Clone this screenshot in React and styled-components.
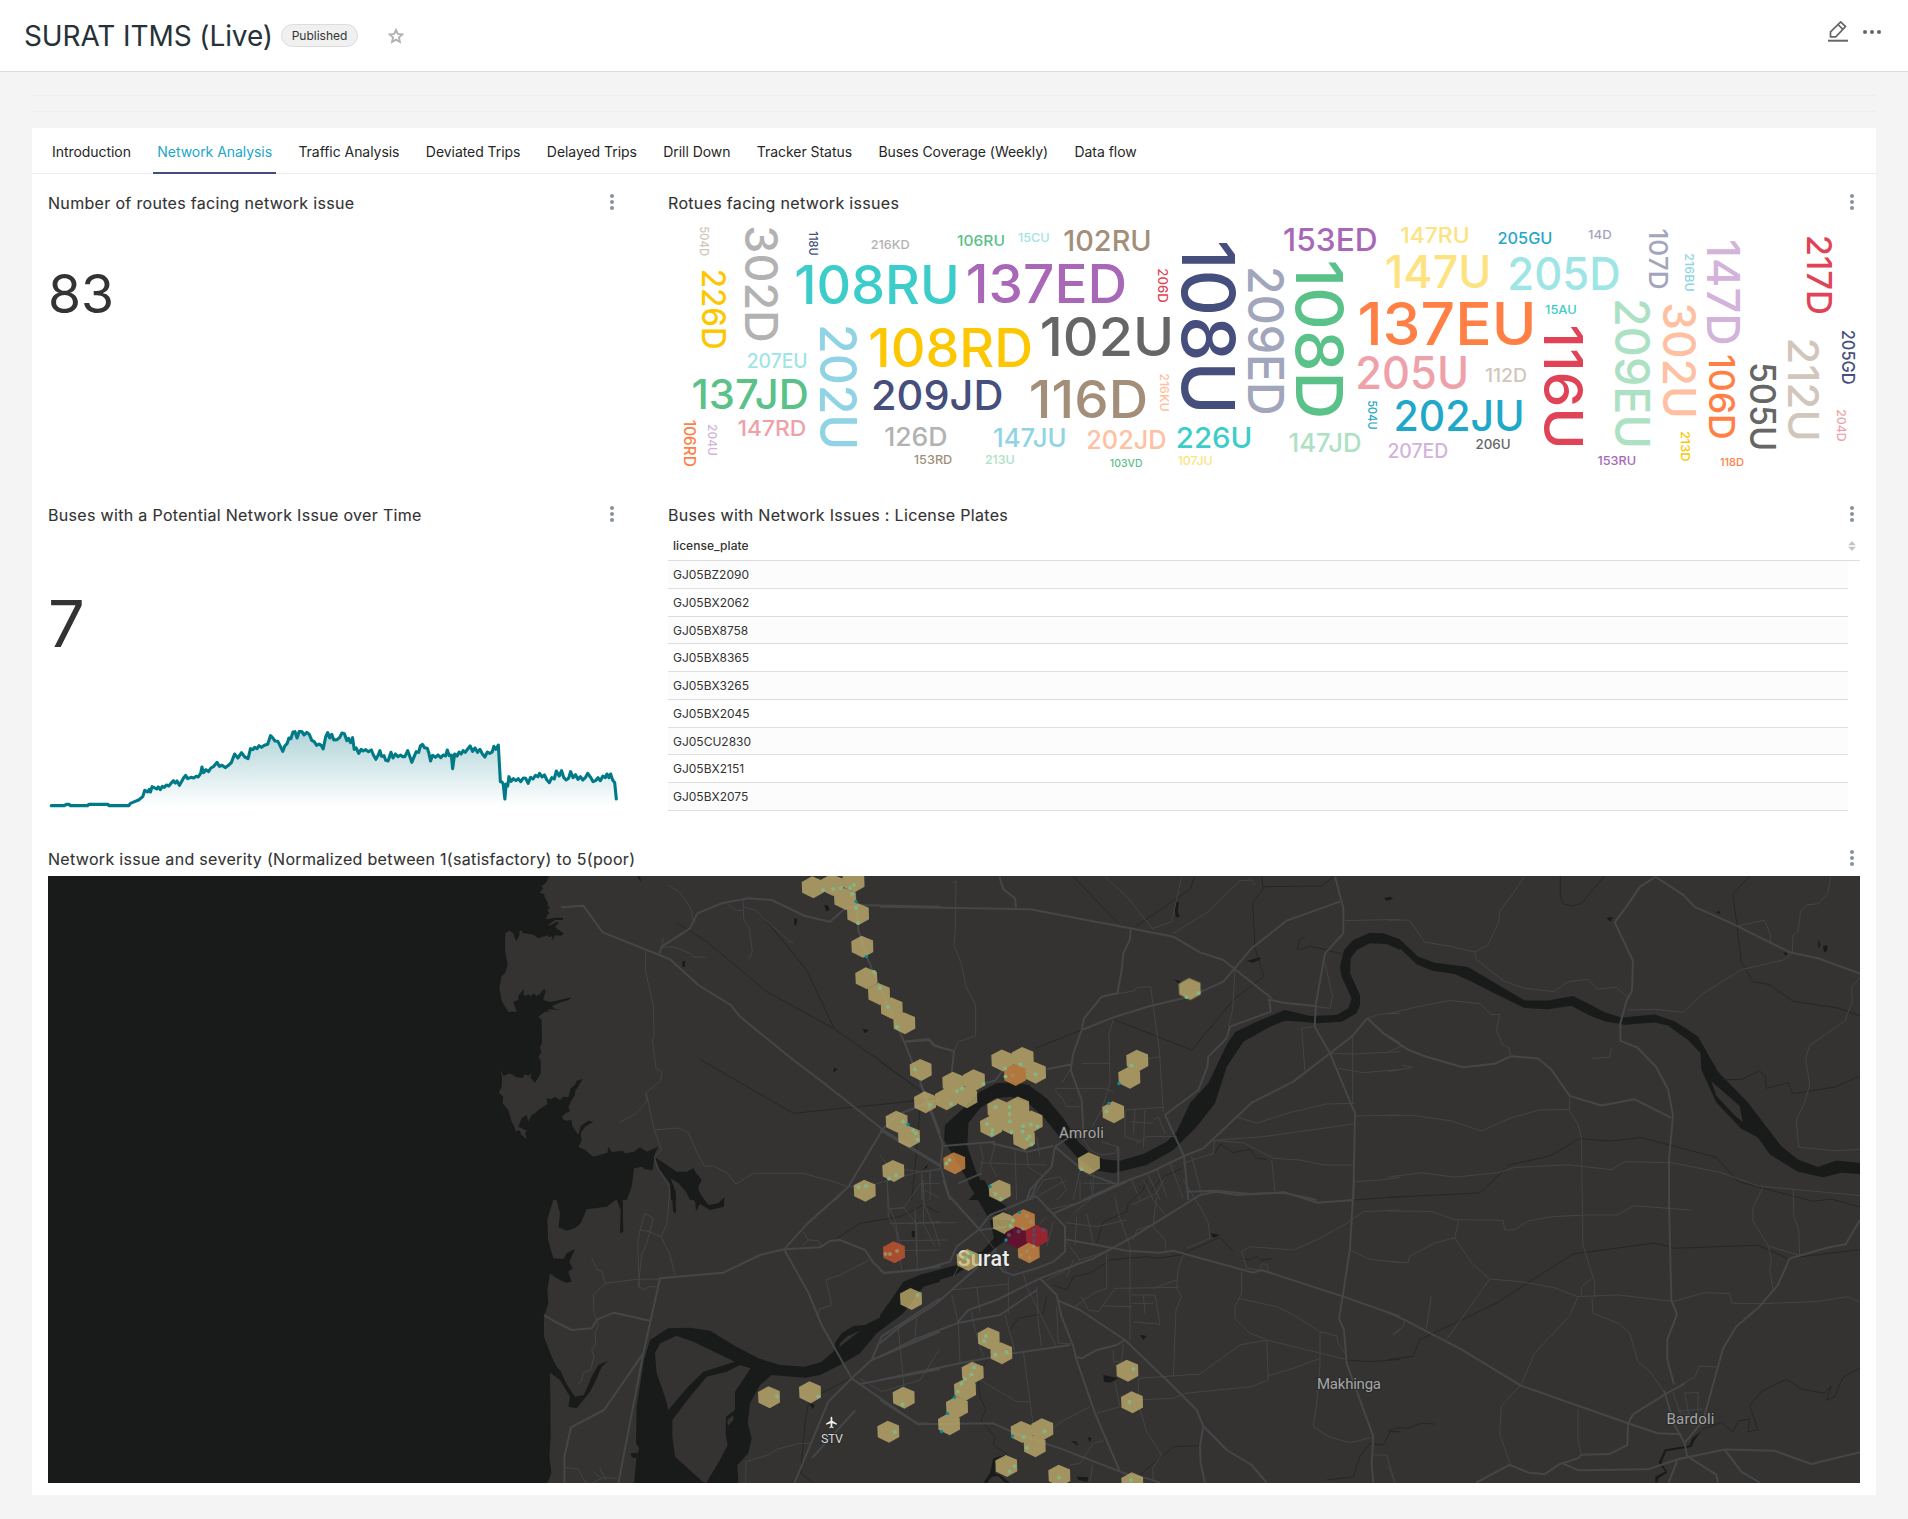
import React from 'react';
import styled, { createGlobalStyle } from 'styled-components';

const GlobalStyle = createGlobalStyle`
  *, *::before, *::after { box-sizing: border-box; }
  body {
    margin: 0;
    background: #f4f4f4;
    color: #333;
    font-family: Inter, "Open Sans", sans-serif;
    font-size: 14px;
  }
  svg { display: block; }
`;

const Page = styled.div`
  display: flex;
  flex-direction: column;
  height: 1519px;
  overflow: hidden;
`;

const Header = styled.header`
  display: flex;
  align-items: center;
  height: 72px;
  flex: none;
  padding: 0 27px 0 24px;
  background: #fff;
  border-bottom: 1px solid #dcdcdc;
`;

const DashboardTitle = styled.h1`
  margin: 0;
  width: 257px;
  font-size: 28px;
  font-weight: 400;
  line-height: 36px;
  letter-spacing: -0.1px;
  color: #263238;
  white-space: nowrap;
`;

const Badge = styled.span`
  height: 23px;
  width: 77px;
  border: 1px solid #dcdcdc;
  border-radius: 12px;
  background: #f0f0f0;
  font-size: 12px;
  line-height: 21px;
  text-align: center;
  color: #333;
`;

const StarButton = styled.div`
  margin-left: 30px;
`;

const HeaderActions = styled.div`
  display: flex;
  align-items: center;
  gap: 15px;
  margin-left: auto;
  margin-bottom: 7px;
`;

const EmptyFilterRow = styled.div`
  flex: none;
  height: 17px;
  margin: 23px 32px 16px;
  border: solid #eeeeee;
  border-width: 1px 0;
`;

const Dashboard = styled.main`
  flex: none;
  height: 1367px;
  margin: 0 32px;
  background: #fff;
`;

const Tabs = styled.nav`
  display: flex;
  gap: 18.4px;
  height: 46px;
  padding: 0 16px;
  border-bottom: 1px solid #ececec;
`;

const Tab = styled.div`
  height: 46px;
  padding: 0 4px;
  font-size: 14px;
  line-height: 48px;
  letter-spacing: -0.05px;
  white-space: nowrap;
  color: ${(p) => (p.$active ? '#20a7c9' : '#262626')};
  border-bottom: 2px solid ${(p) => (p.$active ? '#444e7c' : 'transparent')};
`;

const Grid = styled.div`
  display: grid;
  grid-template-columns: 572px 1192px;
  grid-template-rows: 296px 328px 635px;
  column-gap: 48px;
  row-gap: 16px;
  padding: 18px 16px 0;
`;

const Card = styled.section`
  display: flex;
  flex-direction: column;
  grid-column: ${(p) => (p.$wide ? '1 / -1' : 'auto')};
  min-width: 0;
`;

const CardHeader = styled.div`
  display: flex;
  flex: none;
  justify-content: space-between;
  align-items: center;
  height: 22px;
  padding-right: 6px;
`;

const CardTitle = styled.h2`
  margin: 0;
  font-size: 16px;
  font-weight: 400;
  line-height: 22px;
  letter-spacing: 0.32px;
  color: #333;
  -webkit-text-stroke: 0.12px #333;
`;

const MenuIcon = styled.svg`
  margin-bottom: 2px;
`;

const BigNumber = styled.div`
  padding-top: ${(p) => p.$top}px;
  font-size: ${(p) => p.$size}px;
  line-height: ${(p) => p.$size}px;
  color: #333;
`;

const Spark = styled.svg`
  margin-top: auto;
  margin-bottom: 22px;
  width: 572px;
  height: 90px;
`;

const Cloud = styled.svg`
  width: 1192px;
  height: 274px;
  font-family: Inter, sans-serif;
`;

const TableHead = styled.div`
  display: flex;
  justify-content: space-between;
  align-items: center;
  height: 35px;
  padding: 5px 4px 0 5px;
  border-bottom: 1px solid #ddd;
  font-size: 12px;
  font-weight: 500;
  letter-spacing: 0.05px;
`;

const TableBody = styled.div`
  margin-right: 12px;
`;

const TableRow = styled.div`
  height: 27.78px;
  padding-left: 5px;
  border-bottom: 1px solid #dedede;
  background: ${(p) => (p.$striped ? '#fcfcfc' : '#fff')};
  font-size: 12px;
  line-height: 27px;
`;

const MapCanvas = styled.svg`
  margin-top: 6px;
  width: 1812px;
  height: 607px;
  font-family: "Roboto", sans-serif;
`;

const MenuDots = () => (
  <MenuIcon width="4" height="16" viewBox="0 0 4 16" fill="#879399">
    <circle cx="2" cy="2" r="2" />
    <circle cx="2" cy="8" r="2" />
    <circle cx="2" cy="14" r="2" />
  </MenuIcon>
);

const Panel = ({ title, wide, children }) => (
  <Card $wide={wide}>
    <CardHeader>
      <CardTitle>{title}</CardTitle>
      <MenuDots />
    </CardHeader>
    {children}
  </Card>
);

const C = {
  teal: '#3cccca', purple: '#a868b7', yellow: '#fcc700', dark: '#666666', tan: '#a38f79',
  navy: '#454e7c', red: '#e04355', green: '#5ac189', orange: '#ff7f44', blue: '#1fa8c9',
  gray: '#b2b2b2', teal2: '#9ee5e5', purple2: '#d3b3da', yellow2: '#fde380', red2: '#efa1aa',
  green2: '#ace1c4', orange2: '#fec0a1', blue2: '#8fd3e4', navy2: '#a1a6bd', tan2: '#d1c6bc',
};

// [label, left, right, baseline, font size, colour]
const flatWords = [
  ['216KD', 871.4, 909, 249, 12, C.gray], ['106RU', 958, 1004, 246, 15, C.green],
  ['15CU', 1018.8, 1049, 242, 12, C.teal2], ['102RU', 1065, 1150, 251, 28.5, C.tan],
  ['108RU', 797.5, 956.5, 304, 53, C.teal], ['137ED', 969, 1124, 303, 53, C.purple],
  ['102U', 1043, 1171, 356, 54, C.dark], ['108RD', 871.5, 1030, 367, 53, C.yellow],
  ['207EU', 747.8, 806.5, 368, 19.5, C.teal2], ['137JD', 694, 806.5, 409, 41, C.green],
  ['209JD', 873.5, 1001, 409.5, 41.5, C.navy], ['116D', 1032, 1145, 418, 52, C.tan],
  ['147RD', 738.8, 805, 436, 22, C.red2], ['126D', 885.7, 946, 445.7, 25, C.gray],
  ['147JU', 994.5, 1065, 446.7, 25, C.blue2], ['202JD', 1087.8, 1165, 449, 25, C.orange2],
  ['226U', 1177.5, 1250.6, 448, 29, C.teal], ['153RD', 914.5, 951.6, 464, 12, C.tan],
  ['213U', 985.7, 1014, 464, 12, C.green2], ['103VD', 1110.5, 1141.8, 467, 10.5, C.green],
  ['107JU', 1178.4, 1212, 465, 12, C.yellow2], ['153ED', 1285, 1375.8, 251, 31, C.purple],
  ['147RU', 1401.5, 1468.4, 242.7, 22, C.yellow2], ['205GU', 1498.5, 1551.5, 243.7, 16, C.blue],
  ['14D', 1588.8, 1611, 239, 12, C.navy2], ['147U', 1387.4, 1488.8, 288, 45, C.yellow2],
  ['205D', 1510, 1618, 290, 45, C.teal2], ['137EU', 1361, 1533, 345, 59, C.orange],
  ['15AU', 1545.8, 1576, 314, 12, C.teal], ['205U', 1358, 1466.4, 388.7, 45, C.red2],
  ['112D', 1486, 1526, 382, 18, C.tan2], ['202JU', 1396, 1522, 430.7, 42, C.blue],
  ['147JD', 1290, 1360, 451.7, 25, C.green2], ['207ED', 1388.6, 1447, 458, 19.5, C.purple2],
  ['206U', 1476.2, 1509.8, 449, 12.7, C.dark], ['153RU', 1598.2, 1635.5, 465, 12, C.purple],
  ['118D', 1720.6, 1743.4, 466, 10.5, C.orange],
];

// [label, baseline x, top, bottom, font size, colour]
const tallWords = [
  ['504D', 699.6, 227, 255.3, 12, C.tan2], ['302D', 745, 228, 340, 45, C.gray],
  ['118U', 809.4, 232, 255, 12, C.navy], ['226D', 702.4, 270.7, 347.7, 32, C.yellow],
  ['202U', 820, 327, 447, 51, C.blue2], ['108U', 1181.6, 244, 410.5, 72.5, C.navy],
  ['209ED', 1248.4, 269, 412.7, 49, C.navy2], ['108D', 1296, 263.5, 415.5, 65, C.green],
  ['206D', 1157.8, 269, 302, 12.6, C.red], ['216KU', 1159.8, 374, 411, 12, C.orange2],
  ['106RD', 683.7, 420.7, 466, 15.5, C.orange], ['204U', 708, 424.7, 455.3, 12, C.purple2],
  ['107D', 1649, 230, 288, 25.5, C.navy2], ['216BU', 1685, 254, 291, 12, C.blue2],
  ['147D', 1707, 242, 343, 45, C.purple2], ['217D', 1807, 236.7, 312.7, 34, C.red],
  ['209EU', 1615, 301, 446, 48, C.green2], ['302U', 1662.5, 305, 416, 45, C.orange2],
  ['116U', 1543.8, 327.5, 446.3, 54, C.red], ['106D', 1708.6, 356, 437.7, 35, C.orange],
  ['505U', 1750.3, 364, 449, 35, C.dark], ['212U', 1787.8, 340, 439.3, 42.5, C.tan2],
  ['205GD', 1841.7, 330.7, 383.7, 17, C.navy], ['204D', 1837, 410, 441, 12, C.red2],
  ['213D', 1681, 431.7, 460.7, 12, C.yellow], ['504U', 1367.6, 401, 429, 12, C.blue],
];

const WordCloud = () => (
  <Cloud viewBox="668 214 1192 274" fontWeight="500" textAnchor="middle">
    {flatWords.map(([t, a, b, y, s, c]) => (
      <text key={t} x={(a + b) / 2} y={y} fontSize={s} fill={c} textLength={b - a + s * 0.12} lengthAdjust="spacingAndGlyphs">{t}</text>
    ))}
    {tallWords.map(([t, x, a, b, s, c]) => (
      <text key={t} transform={`translate(${x} ${(a + b) / 2}) rotate(90)`} fontSize={s} fill={c} textLength={b - a + s * 0.12} lengthAdjust="spacingAndGlyphs">{t}</text>
    ))}
  </Cloud>
);

const trend = '126,947 158,947 163,943 170,943 173,947 215,947 218,943 265,943 267,947 316,947 320,940 330,935 340,930 350,920 355,901 362,906 366,898 369,906 373,890 378,893 384,897 388,891 393,899 398,889 403,892 408,885 414,888 420,879 425,872 430,879 434,873 440,886 446,873 450,864 455,856 460,866 468,862 475,864 481,859 486,861 492,850 495,831 499,848 505,839 511,845 517,834 524,829 532,817 538,829 545,826 552,833 560,826 567,818 575,792 583,804 592,788 600,801 608,806 614,776 620,779 624,772 630,776 635,767 641,772 648,766 656,763 663,737 668,743 674,753 681,754 686,766 693,784 698,768 704,760 708,744 713,746 718,726 723,725 728,744 733,725 740,725 745,735 752,727 758,733 764,751 770,755 776,766 782,762 787,766 792,777 798,741 803,728 808,744 813,733 818,750 826,749 832,743 838,729 844,731 850,752 854,745 859,758 864,743 868,778 873,774 879,790 885,778 890,783 896,779 903,785 910,780 915,795 921,808 927,795 931,782 935,799 941,797 945,811 951,813 958,787 963,804 969,792 975,800 982,795 986,800 992,800 999,782 1004,799 1009,817 1015,799 1020,785 1026,787 1030,768 1035,763 1040,773 1047,775 1051,790 1055,813 1060,796 1067,802 1073,795 1080,803 1086,795 1092,798 1096,780 1101,797 1106,795 1109,836 1114,792 1120,798 1125,786 1130,792 1135,782 1140,787 1146,777 1152,768 1158,784 1164,774 1170,787 1176,778 1182,792 1188,801 1194,786 1200,790 1206,786 1210,769 1215,778 1221,765 1226,875 1230,876 1233,882 1237,927 1240,882 1244,888 1247,860 1252,874 1258,866 1264,872 1270,866 1276,875 1282,864 1288,865 1294,880 1300,862 1306,867 1312,856 1318,860 1322,850 1328,861 1334,855 1340,870 1346,878 1352,863 1358,867 1363,843 1370,858 1376,842 1381,862 1387,870 1393,865 1398,845 1404,863 1410,854 1416,868 1422,860 1428,870 1434,863 1440,850 1447,862 1453,875 1459,872 1465,863 1471,872 1477,858 1483,863 1487,852 1492,863 1496,852 1501,870 1506,878 1510,927';

const Sparkline = () => (
  <Spark viewBox="118 690 1401 270" preserveAspectRatio="none">
    <defs>
      <linearGradient id="trendFill" x1="0" y1="720" x2="0" y2="950" gradientUnits="userSpaceOnUse">
        <stop offset="0" stopColor="#afd3d7" />
        <stop offset="1" stopColor="#fff" />
      </linearGradient>
    </defs>
    <polygon points={`126,950 ${trend} 1510,950`} fill="url(#trendFill)" />
    <polyline points={trend} fill="none" stroke="#007a87" strokeWidth="3.1" strokeLinejoin="round" strokeLinecap="round" vectorEffect="non-scaling-stroke" />
  </Spark>
);

const plates = ['GJ05BZ2090', 'GJ05BX2062', 'GJ05BX8758', 'GJ05BX8365', 'GJ05BX3265', 'GJ05BX2045', 'GJ05CU2830', 'GJ05BX2151', 'GJ05BX2075'];

// The base map is drawn in five tiles, each with its own coordinate system.
const tiles = [
  {
    frame: 'translate(460 870) scale(.33333)',
    water: [
      'M-1300,0 L268,0 L268,18 258,38 245,48 250,56 238,68 252,72 256,86 264,98 262,108 270,110 262,122 268,128 262,135 258,148 285,143 310,143 308,150 285,150 268,162 262,168 275,164 290,155 296,158 285,172 300,182 312,192 302,197 285,196 278,212 276,198 268,202 262,196 235,205 222,195 210,192 190,190 182,180 178,185 178,196 170,212 165,206 160,190 148,182 136,190 135,240 143,285 135,310 125,318 118,355 126,395 145,425 170,425 160,395 175,390 175,376 182,370 192,356 190,372 195,378 206,372 212,380 220,370 230,378 240,372 252,356 257,364 252,380 250,390 270,396 300,390 335,382 325,390 298,398 275,408 285,416 305,420 262,418 268,424 255,425 235,440 245,450 246,520 240,530 244,548 235,560 242,570 242,610 225,638 212,625 215,608 205,618 195,612 188,624 170,622 150,610 130,618 122,600 126,625 125,650 116,668 130,680 128,700 145,720 155,755 162,768 168,785 178,780 185,795 200,808 195,790 200,782 175,770 185,745 200,735 205,755 215,735 225,730 235,720 262,702 260,685 275,688 285,680 300,690 310,680 325,682 332,655 345,645 350,632 368,627 345,665 345,675 335,690 325,710 330,725 318,728 305,740 312,750 322,752 335,750 336,765 345,780 355,795 362,768 385,752 400,755 375,770 362,790 365,812 355,830 375,840 400,860 442,848 446,830 455,846 488,842 495,850 520,846 540,832 560,845 595,830 585,850 578,900 555,898 545,890 522,895 515,950 500,990 -1300,990Z',
      'M585,862 L610,878 650,905 680,905 700,895 710,912 725,930 715,950 722,990 690,990 678,965 655,940 632,925 645,960 648,990 632,990 630,940 600,900Z',
      'M530,18 L540,20 543,35Z M1093,105 L1103,105 1110,120 1098,124Z M1003,145 L1012,148 1008,168 1002,162Z M666,275 L676,272 674,292 668,290Z M1208,476 L1226,480 1215,490Z M1122,592 L1132,598 1120,608Z M1388,898 L1405,883 1400,894Z',
    ],
    rail: ['650,158 740,215 920,365 1120,475 1250,565 1385,665', '905,135 1040,300 1122,475', '720,568 1000,730 1440,685', '1382,690 1370,840 1355,990'],
    minor: ['625,45 660,68 690,110 700,150 710,155', '850,88 850,120 830,122 802,102', '850,120 852,150 868,175 877,245 867,268', '852,112 885,120 940,170 990,215 1000,217', '610,205 606,232 640,230 690,250 700,260 737,262', '557,240 556,300 580,405 582,500 577,510 588,595 605,605 602,632 558,668 560,695 528,730 478,758', '560,675 583,780 605,840 583,860 590,890 628,950 630,990', '583,780 655,774 685,788 712,850 733,888 760,888 802,910 828,942 880,910 1030,910 1110,932 1165,950 1210,952 1290,930 1380,905 1440,900', '1282,925 1284,990', '1385,908 1390,990', '1385,942 1410,940 1412,905', '1395,960 1440,985'],
    major: ['303,112 370,107 428,187 598,255 630,268 715,345 812,405 840,440 1000,570 1080,630 1270,780 1440,885', '598,250 605,230 690,175 712,130 785,100 865,85 935,90 1035,138 1110,155 1150,120 1190,105 1440,110', '1180,40 1190,105 1195,180 1220,260 1330,510 1395,670 1440,790', '1330,515 1405,507 1420,525 1440,530', '1125,990 1165,950 1270,775 1310,735 1440,685'],
  },
  {
    frame: 'translate(460 1190) scale(.33333)',
    water: [
      'M-1300,0 L285,15 275,45 262,90 264,150 280,205 310,207 320,190 345,177 328,215 338,235 325,245 335,275 318,278 300,270 285,262 270,250 262,300 265,340 252,380 252,440 275,500 290,530 303,545 318,580 345,620 372,615 395,560 415,525 445,512 425,530 408,570 390,605 350,655 325,650 330,620 300,570 270,548 272,740 268,800 274,850 262,880 -1300,880Z',
      'M-10,0 L510,0 488,25 490,125 480,130 482,60 470,28 440,50 380,58 362,100 345,115 320,122 296,112 300,70 292,40 287,15 0,15Z',
      'M634,0 L646,0 648,72 640,65Z M685,0 L715,0 725,18 745,45 775,40 793,22 792,50 750,60 720,42 708,64 706,38Z',
      'M1440,243 L1380,255 1330,280 1300,320 1275,375 1215,405 1180,408 1145,430 1125,460 1120,485 1085,515 1035,530 960,525 895,505 820,465 750,422 690,413 625,415 570,450 552,510 530,650 528,760 538,775 530,800 522,880 835,880 832,825 865,790 875,745 863,700 870,640 900,585 935,555 1035,563 1080,555 1140,525 1200,490 1250,430 1330,370 1390,290 1440,275Z',
      'M512,790 L532,788 530,805 515,802Z M1048,640 L1065,645 1058,658Z M1355,123 L1365,123 1363,143 1356,140Z',
    ],
    land: ['M585,490 L600,460 650,437 700,455 825,515 730,545 680,595 625,660 615,620 590,550Z', 'M872,535 L825,605 825,660 798,680 797,735 803,765 780,810 738,880 725,872 645,800 637,740 637,690 690,620 740,560 800,545 840,525Z', 'M1138,472 L1140,460 1160,440 1200,422Z', 'M802,690 L820,675 820,690 804,708Z'],
    rail: ['1440,70 1390,45 1320,80 1200,100 1130,145', '1180,560 1080,612 1045,640 1035,700 1022,850 1062,880'],
    minor: ['630,0 620,105 603,140 568,125 540,120 555,70 580,85 560,160 545,195 535,290 555,300 565,290 597,290', '540,120 533,160 538,295', '603,140 630,195 645,255', '395,205 412,240 425,243 436,280 530,268 600,267', '436,280 400,315 402,370 415,405 405,430 408,460 395,480 402,500 392,540 370,548 365,570 355,582', '315,832 355,838 378,880', '400,845 430,870 M418,832 438,870', '395,880 430,862 470,865', '1050,760 1020,760 950,778 925,795 858,815 857,880', '1228,210 1140,255 1098,270 1115,345 1078,358 1075,375', '1030,125 1045,150 1025,168', '1045,150 1075,152 1085,170', '1282,0 1285,80 1308,120 1325,240', '1285,58 1330,52 1370,100 1440,95', '1298,100 1440,98', '1370,100 1372,235', '1325,182 1440,180', '1315,415 1332,590', '1370,380 1365,450', '1200,565 1265,605 1380,570 1440,475', '1392,0 1390,100 1425,170'],
    major: ['1155,0 1045,98 972,178 900,195 790,248 600,265 550,490 475,880', '550,490 432,660 333,712 313,800 313,880', '252,375 285,395 335,420 395,415 412,388 462,368 570,392', '972,178 1080,172 1110,153 1140,150 1215,180 1240,218 1275,250 1440,230', '972,178 1045,308 1085,405 1175,565 1225,600 1370,700 1440,703', '1440,325 1340,390 1265,440 1235,510 1175,565 1105,635 1055,755 1003,880', '1235,510 1440,425', '1195,583 1440,537', '1057,803 1185,662'],
  },
  {
    frame: 'translate(880 870) scale(.33333)',
    water: [
      'M265,990 L285,970 245,900 215,850 192,810 195,765 255,710 300,665 350,640 400,637 445,645 500,685 550,745 595,815 630,850 670,868 720,872 790,852 860,815 890,785 930,700 985,640 1040,525 1065,487 1120,460 1215,420 1290,438 1370,435 1405,415 1415,385 1385,320 1380,290 1392,240 1420,210 1470,188 1510,190 1560,208 1560,240 1520,222 1470,220 1430,240 1412,265 1410,310 1440,375 1440,405 1430,430 1385,455 1310,460 1270,455 1215,452 1170,470 1090,515 1040,590 1005,700 950,770 880,840 800,885 700,910 640,900 590,860 550,815 490,740 440,695 390,680 345,685 300,715 265,760 262,830 290,910 335,990Z',
      'M888,93 L897,97 893,125 900,140 888,142 884,118Z M1100,273 L1140,262 1142,268 1118,278Z M882,328 L905,335 900,345Z M1512,85 L1530,80 1540,86 1520,92Z',
    ],
    rail: ['580,20 715,160', '945,20 930,58 770,168', '1150,50 1325,48 1360,20', '1145,20 1150,55 1118,98 1125,235 1152,320 1062,388 935,540 705,450', '465,535 605,480', '0,575 100,645', '1252,240 1258,210 1275,200 M1258,240 1290,228 1340,240 1385,252', '1005,850 1020,822 1060,848 1110,838 1130,865 1158,868', '905,895 850,920 815,960'],
    minor: ['215,40 228,32 226,180 222,225 245,285 258,350 287,405 287,498 235,515 222,545', '675,20 745,85 820,180', '905,20 875,155 820,175', '1125,45 1115,30 1080,32 985,125 880,190', '710,372 765,362 770,352 812,350 830,485 838,540 850,725', '700,450 687,490 690,640 665,720 637,770', '605,580 690,580', '545,640 570,600', '525,655 670,655 700,665', '780,570 842,560', '1065,300 1058,420 1045,470', '1265,475 1300,470 M1265,475 1275,605', '1335,280 1358,380 1350,415 1310,410', '1395,152 1560,148', '1418,500 1418,700', '1352,550 1420,552 1560,545', '1375,595 1450,608 1560,598', '1462,445 1500,432 1560,430', '1070,740 1130,760 1220,730 1340,702 1425,700', '990,812 1150,800 1420,762', '1005,812 1090,818 1180,865 1260,870 1330,885 1420,885', '1425,738 1560,735', '1428,935 1500,930 1560,922', '1175,870 1185,965', '735,720 850,712', '735,720 735,800 780,815', '765,720 760,790', '795,720 790,835', '820,750 835,740 855,790', '750,755 820,760', '600,710 560,710 550,690 525,660', '300,825 310,865 300,905', '345,825 330,880 350,920', '405,845 410,990', '300,878 400,882 500,885', '440,845 445,890 490,920', '470,800 480,860', '770,820 800,800 890,800', '455,990 490,930 540,920', '540,920 560,960 530,990', '600,900 580,990', '640,900 640,960', '800,905 840,990', '830,895 860,980', '870,880 910,985', '755,930 780,990', '610,940 715,940', '910,880 1000,850 1003,812', '935,860 965,975', '0,855 30,895 130,905 180,895', '125,905 125,990', '150,900 150,990 M125,940 180,940', '605,800 630,840 660,855 705,850 712,830 665,815'],
    major: ['0,110 450,118 750,175 880,200 960,247 1030,270 1175,385', '358,20 370,58 405,85 408,112', '752,178 750,208 730,250 725,300 712,370 665,380 612,445 605,480 580,550 572,600 605,690 610,780', '605,480 700,442 810,408 930,380 1030,335 1115,235 1220,152 1380,95', '500,598 575,583', '1365,20 1390,115 1390,190 1335,250 1308,400 1304,470 1350,550 1425,730 1420,990', '1165,388 1210,398 1305,408', '1168,388 1172,425 1050,470 1040,505 985,560 982,590 955,660 855,735 912,858', '1462,445 1415,500 1350,550 1240,635 1115,698 970,835 912,858 815,905 715,942 610,990', '1462,445 1510,490 1560,520', '190,828 345,815 M335,820 440,845 520,828', '525,830 515,890 450,960 440,990', '525,830 570,800 M525,830 620,910 715,945 715,830', '75,515 150,510 165,528 222,543 215,610', '310,640 345,632 370,600', '120,640 188,820 182,890 210,990', '0,780 182,890', '235,940 305,910', '912,858 925,990', '920,965 1010,962 1110,972 1210,968 1310,990'],
  },
  {
    frame: 'translate(880 1180) scale(.33333)',
    water: [
      'M265,10 L275,0 313,0 340,50 380,80 372,95 387,100 322,108Z', 'M330,120 L395,120 400,165 350,200 320,225 260,262 225,285 130,315 80,340 60,390 30,425 0,450 0,405 40,350 70,305 120,285 230,255 250,225 305,215 342,175Z',
      'M95,155 L104,157 103,172 96,168Z M992,160 L1020,165 1000,174Z M780,465 L800,468 790,480Z M670,585 L715,595 690,608 672,605Z M572,782 L590,785 595,798Z M622,772 L635,774 630,786Z M590,890 L625,892 622,906 595,900Z',
      'M310,908 L330,880 340,835 375,825 380,835 350,840 345,880 360,885 390,908 375,908 355,888 335,890 322,908Z',
    ],
    rail: ['800,0 790,30 745,70 740,95 670,125 650,190', '1060,215 1020,172 900,225 830,235 800,230 740,235 690,240 630,280 580,290 560,330 520,315 M500,350 490,400 415,415 390,450', '1085,235 1110,240 1130,230 1145,240 1175,235', '1420,60 1560,50', '1395,540 1470,545 1560,538', '960,797 880,800 780,885', '320,540 295,600 300,650 318,690 302,720 345,770 340,795 385,825', '1340,900 1420,890 1440,830 1470,790 1510,795 1530,755 1560,755'],
    minor: ['20,0 28,85 45,120 68,230', '28,85 70,85 130,0', '30,130 230,128 M60,182 200,180', '130,0 132,70 160,135 180,200', '105,85 110,230', '470,50 540,10 560,0', '500,90 590,70 720,15', '600,0 600,60 M630,0 640,50 580,100', '590,110 585,195', '555,128 650,140 740,120', '620,100 640,190', '705,50 715,100 750,200 750,480', '755,75 830,40 850,0', '760,180 770,150 815,135 855,180 858,210', '790,0 820,60 860,110', '910,0 960,80 985,130 990,175 920,205 M830,50 820,130', '910,225 895,265 890,325 905,350 888,390 880,590', '680,220 680,325 640,340 585,380', '820,325 890,300 M705,325 895,322', '705,325 655,395 625,390 605,350', '755,345 825,345 840,433 760,425', '755,370 820,370 M790,345 795,400', '670,378 755,380', '470,320 475,430 485,500', '430,280 440,320 530,500', '385,290 385,400 M290,320 300,400', '215,330 385,312', '215,345 235,430 240,550', '275,395 280,430 310,530', '375,405 405,515', '430,515 460,740', '300,600 410,665 450,665', '1085,275 1085,340 1065,380 1065,415 1110,460 1160,478', '1075,355 1190,380 1240,405 1320,455 1370,468', '1320,455 1320,560 1310,670 1300,740 1345,770 1410,788 1478,772', '775,595 960,582 1080,495 1160,480 1395,538', '1160,480 1165,600 1115,620 915,640 880,655 755,660', '1165,587 1240,565 1320,535', '705,605 720,680 650,700', '775,595 775,670 800,755 845,825 818,865 820,905', '1085,215 1110,200 1240,210 1310,180 1400,130 1450,95 1560,90', '1085,215 1100,265 1140,270 M1140,265 1145,252 1160,252 1165,275', '1410,210 1470,238 1560,248', '630,680 545,725 510,750', '700,510 700,545 725,545 730,490', '640,790 670,782 M640,790 600,850 570,855', '638,855 630,905', '1370,465 1375,490 1395,520', '1480,825 1520,825 1545,905', '1560,450 1540,465', '555,180 600,240 575,260 540,280 500,300', '580,240 560,290 M600,240 690,210', '530,380 535,490 570,490', '240,250 220,290 M345,130 400,170 M300,150 345,210 380,275', '500,110 470,140 500,180 M520,125 500,200'],
    major: ['0,490 60,440 170,370 300,255 330,230 350,205', '0,530 100,480 230,430 360,405 470,330 M230,430 265,390 350,360 480,295 640,235 760,170 960,45 1010,35 1070,45 1215,37 1310,68 1420,60', '0,600 240,550 400,520 570,495', '0,660 115,733 340,730 410,762 540,805 760,890 800,895', '455,55 330,105 295,150 230,200 210,245 120,270 10,278 0,270', '445,50 470,50 555,140 555,215 520,245 470,265 400,285 370,275 350,245', '520,100 640,50 740,5', '555,178 650,195 740,212 840,218 880,212 1120,278 1145,270 1390,350 1560,410', '480,295 530,345 545,410 580,500 590,540 645,700 720,875', '530,360 600,390 735,480 870,610 950,690 970,738 1040,810 1115,855 1160,908', '735,480 710,495 650,510 605,535 590,530', '970,738 960,800 962,850 975,908', '1422,0 1410,205 1388,350 1377,415 1392,450 1400,550 1480,770 1475,850 1480,908', '800,895 840,908', '455,50 475,0', '190,0 205,45 300,150 380,140'],
  },
  {
    frame: 'translate(1388 830) scale(.33333 .4394)',
    water: [
      'M-14,236 L0,240 40,252 90,288 140,302 240,312 330,352 410,388 480,388 555,378 600,395 650,415 700,427 800,420 860,435 930,470 990,550 1080,620 1130,670 1180,720 1230,750 1290,767 1345,752 1416,758 1416,783 1360,780 1305,790 1230,778 1145,738 1110,700 1060,680 985,620 940,545 938,508 900,478 840,445 800,438 710,443 650,435 605,422 550,400 480,408 410,405 320,372 250,345 200,328 130,320 85,305 40,272 -14,252Z',
      'M655,200 L675,198 667,208Z M985,188 L992,183 998,191Z M1290,250 L1298,260 1292,270Z M1305,264 L1318,262 1318,275 1308,279Z M1185,278 L1198,280 1194,287Z',
      'M940,1368 L912,1385 905,1400 830,1410 812,1440 832,1460 802,1472 802,1485 808,1485 812,1475 838,1462 820,1440 835,1414 910,1404 920,1388Z',
    ],
    land: ['M970,572 L1055,628 1065,665 1040,650 985,605Z'],
    rail: ['517,105 517,150 525,168 550,173 580,167 650,105', '1085,105 1035,145 1060,300 1095,345 1145,352 1215,390 1350,405 1416,423', '1000,568 1060,568 1115,548 1132,560 1135,588 1200,575 1215,600 1340,585 1416,560', '0,836 275,826 365,762 485,742 575,702 665,708 760,700 985,745 1050,800 1275,845 1330,840 1416,858', '0,1205 75,1198 95,1160 240,1108 330,1075 420,1030 555,965 800,940 860,952 1110,945 1200,975 1416,955', '0,1368 30,1360 60,1362 100,1350 140,1352', '940,1365 1000,1348 1035,1370 1050,1345 1085,1340 1080,1370 1110,1365 1085,1310 1120,1278 1195,1250 1240,1272 1310,1282 1330,1265 1315,1298 1340,1290 1365,1245 1416,1225'],
    minor: ['410,105 370,150 335,185 332,210 300,262 260,278 190,265 110,255 65,205 0,205', '260,278 265,295 350,345 410,360 498,368 540,345 600,340 630,362 685,358 718,380', '718,410 800,408 885,415 940,375 1060,318 1190,295 1212,280', '1328,105 1320,145 1290,168 1258,170 1238,185 1230,230 1215,240 1213,280', '1052,218 1130,205 1148,240 1145,258', '1416,335 1390,360 1393,390 1370,435 1265,490 1253,520 1265,580 1250,620 1225,660 1232,722 1340,730 1416,727', '0,418 90,402 185,388 275,395 310,420 335,420 325,455 345,490 362,495 368,515', '0,505 45,490 M0,550 75,540 40,535', '613,520 665,517 670,497', '0,650 80,650 190,662 280,685 370,655 455,637 545,636 545,610', '545,640 570,670 580,700 585,945 620,1030 620,1065', '0,790 100,780 200,790 330,780 380,768 540,762 670,773 710,755 850,757 1000,780 1110,810 1220,818 1416,832', '0,867 130,868 200,887 345,888 350,910 380,910 420,890 490,880 600,876 690,876 735,855 910,865', '212,888 200,928 250,985 305,1022 175,1160', '200,928 140,940 65,970 60,985 0,982', '305,1022 400,1028 500,1042 570,1062 690,1058 855,1073 950,1053 1025,1055 1032,1077 1120,1078 1290,1073 1380,1062 1416,1075', '580,1060 580,1040 610,1022', '570,1062 545,1105 485,1155 440,1190 400,1262 340,1310 335,1375 370,1450', '612,1065 615,1100 690,1122 725,1145 750,1210 785,1232 828,1278', '130,1062 115,1135 M50,1115 45,1130 15,1148', '1125,812 1095,860 1095,890 1140,945 1150,975 1145,1000 1155,1045', '1215,818 1218,880 1232,910 1235,968 1145,948', '570,1318 570,1390 580,1420', '855,1280 880,1335 870,1340 M890,1280 905,1340 M890,1282 930,1280 930,1340 870,1322 945,1318 M985,1222 935,1220 920,1245 880,1262', '0,1445 20,1485'],
    major: ['0,470 60,500 110,515 225,540 320,532 368,515 450,520 490,545 545,605 640,627 740,613 850,655', '805,105 755,130 715,175 680,210 735,298 732,365 715,390 697,440 697,480 748,495 805,540 840,590 855,650 843,750 843,850 850,1070 867,1102 838,1160 838,1205 858,1262', '805,108 885,147 920,175 1030,212 1205,278 1290,292 1416,327', '0,1098 50,1115 220,1182 400,1265 720,1350 810,1373 880,1375', '265,1485 365,1445 420,1462 470,1466 515,1443 570,1430 580,1422 665,1420 718,1400 720,1350 735,1330 830,1285 890,1260', '525,1442 570,1457 780,1455 870,1432 1010,1410 1160,1413 1270,1443 1416,1416', '828,1275 860,1355 890,1395 897,1425 985,1467 990,1485', '890,1395 945,1345 1005,1180 1045,1130 1110,1088 1170,1035 1205,975 1320,950 1373,943 1416,887', '868,1435 842,1485', '1010,1410 1060,1460 1115,1485'],
  },
];

const Road = ({ points, color, width }) => (
  <path d={`M${points}`} stroke={color} strokeWidth={width} vectorEffect="non-scaling-stroke" />
);

const Tile = ({ tile }) => (
  <g transform={tile.frame}>
    {tile.water.map((d) => <path key={d} d={d} fill="#191a1a" />)}
    {(tile.land || []).map((d) => <path key={d} d={d} fill="#343332" />)}
    <g fill="none" strokeLinejoin="round">
      {tile.rail.map((d) => <Road key={d} points={d} color="#252525" width="0.9" />)}
      {tile.minor.map((d) => <Road key={d} points={d} color="#434446" width="1" />)}
      {tile.major.map((d) => <Road key={d} points={d} color="#454648" width="2" />)}
    </g>
  </g>
);

const HEX = { low: '#c7b471', mid: '#db8f45', high: '#cf582f', severe: '#b7202f', worst: '#6e0a2f' };
const hexes = [
  [812.7, 887.3], [832.3, 885], [853.5, 881.5], [845, 899], [858, 914], [862.3, 946.7], [866.3, 978.3], [879, 994],
  [891.7, 1008.3], [904.3, 1023.3], [920.7, 1070], [925, 1102.3], [896.7, 1121.7], [909, 1136.7], [893.3, 1171],
  [864.7, 1190.7], [946, 1099.3], [953.3, 1082.7], [966.3, 1097.3], [974, 1080.3], [1002.3, 1060.5], [1022.7, 1057.9],
  [1035, 1072.7], [998.3, 1109.5], [1018.3, 1107.5], [991, 1126.5], [1011, 1123.7], [1031.7, 1121.5], [1024, 1138.7],
  [999.7, 1190.7], [1089, 1163.3], [1113.3, 1112.3], [1129.3, 1077.7], [1137.3, 1060.7], [1189.7, 989],
  [1003.7, 1223], [967.7, 1260], [911, 1299], [988.7, 1338.3], [1001.3, 1353.3], [972.7, 1372.7], [965, 1389.7],
  [957, 1407.3], [949, 1424.3], [903.7, 1397.7], [888.3, 1431.7], [1021.7, 1432], [1042.3, 1429.3],
  [1034.7, 1446.3], [1006.3, 1466], [1059.3, 1475.7], [1132.3, 1483.3], [1127.3, 1370.7], [1132, 1402.3],
  [769, 1397.3], [810, 1392.3],
  [1015, 1075, HEX.mid], [954.3, 1163.3, HEX.mid], [1024, 1220.3, HEX.mid], [1028.7, 1252.3, HEX.mid],
  [894, 1252.3, HEX.high], [1016.7, 1237.7, HEX.worst], [1036.7, 1236, HEX.severe],
];

const samples = [
  [823, 890], [833, 889], [841, 888], [850, 888], [854, 885], [852, 894], [856, 908], [858, 923], [874, 972], [880, 988],
  [888, 1007], [897, 1027], [915, 1069.5], [930, 1105], [903, 1121.5], [913, 1130.5], [916, 1133.5], [917.5, 1139.5],
  [896, 1175.5], [889, 1178.5], [858.5, 1187], [866, 1186], [951, 1104], [957, 1091], [962, 1088.5], [983.5, 1084],
  [1005, 1068.5], [1020.5, 1064.5], [1005.5, 1076.5], [1035.5, 1074.5], [995.5, 1107], [1009.5, 1107],
  [1009.5, 1114], [1010, 1121.5], [987, 1124], [992.5, 1130], [992, 1134], [1011.5, 1132], [1023, 1126], [1022.5, 1131.5],
  [1031, 1124.5], [1037.5, 1126.5], [1027, 1139], [1029.5, 1136.5], [1031.5, 1144.5], [949.5, 1160], [946.5, 1163.5],
  [995.5, 1194], [1001, 1199], [1081.5, 1169], [1106.5, 1111.5], [1131.5, 1065.5], [1186.5, 997], [1198.5, 993],
  [1013, 1220.5], [1010.5, 1226], [965.5, 1257.5], [971, 1254], [917.5, 1295], [986, 1336], [984, 1341],
  [995.5, 1354.5], [1006.5, 1352], [974, 1367.5], [971.5, 1374.5], [965, 1379], [961.5, 1383.5], [958, 1391.5],
  [902.5, 1404.5], [895, 1432], [1023.5, 1437], [1044.5, 1431.5], [1027, 1448], [1014.5, 1466.5], [1009.5, 1471.5],
  [1059, 1477.5], [1131, 1480], [1133.5, 1369], [1129.5, 1402], [777, 1396.5], [818, 1396.5],
];
const outliers = [[856, 901.5], [866.5, 956.5], [908, 1124.5], [1119, 1083.5], [1109, 1103.5], [990, 1186.5], [1019.5, 1212.5], [954.5, 1397.5], [947.5, 1413.5], [941.5, 1431.5], [1012.5, 1436], [1006, 1240]];
const warmSamples = [[1012.5, 1075.5], [1027, 1216], [1031, 1222], [1023, 1228.5], [1021, 1255], [1027, 1251], [1029.5, 1258], [1033.5, 1246.5], [885.5, 1254], [890, 1254], [897, 1251]];
const coolSamples = [[1009, 1235], [1018.5, 1231.5], [1034, 1230], [1034, 1235], [1043.5, 1230], [1034, 1241]];

const SampleDots = ({ points, color, r = 2 }) => points.map(([x, y]) => (
  <circle key={`${x}-${y}`} cx={x} cy={y} r={r} fill={color} />
));

const BaseMap = () => (
  <MapCanvas viewBox="48 876 1812 607">
    <rect x="48" y="876" width="1812" height="607" fill="#343332" />
    {tiles.map((t) => <Tile key={t.frame} tile={t} />)}
    <g textAnchor="middle" stroke="#2a2a2a" strokeWidth="2" paintOrder="stroke" strokeLinejoin="round">
      <text x="1081.5" y="1137.5" fontSize="15" fill="#a6a6a6" textLength="45">Amroli</text>
      <text x="1349" y="1389" fontSize="15" fill="#a6a6a6" textLength="64">Makhinga</text>
      <text x="1690.5" y="1424" fontSize="15" fill="#a6a6a6" textLength="48">Bardoli</text>
      <text x="983.5" y="1266" fontSize="21.5" fontWeight="500" fill="#ececec" textLength="52">Surat</text>
      <text x="832" y="1443.3" fontSize="12.5" fill="#d8d8d8" textLength="22">STV</text>
    </g>
    <path transform="translate(824.9 1415.6) scale(.57)" fill="#eee" d="M21 16v-2l-8-5V3.5c0-.83-.67-1.5-1.5-1.5S10 2.67 10 3.5V9l-8 5v2l8-2.5V19l-2 1.5V22l3.5-1 3.5 1v-1.5L13 19v-5.5l8 2.5z" />
    <g opacity="0.75">
      {hexes.map(([x, y, c]) => (
        <polygon key={`${x}-${y}`} transform={`translate(${x} ${y}) scale(1.04)`} points="-10.6,-5.2 -0.6,-10.6 10.3,-6 10.6,5.1 0.7,10.6 -10.1,5.3" fill={c || HEX.low} />
      ))}
    </g>
    <SampleDots points={samples} color="#84b584" />
    <SampleDots points={warmSamples} color="#a08a60" />
    <SampleDots points={coolSamples} color="#5e4465" />
    <SampleDots points={outliers} color="#0f8b98" r={1.7} />
  </MapCanvas>
);

const tabNames = ['Introduction', 'Network Analysis', 'Traffic Analysis', 'Deviated Trips', 'Delayed Trips', 'Drill Down', 'Tracker Status', 'Buses Coverage (Weekly)', 'Data flow'];

export default function App() {
  return (
    <Page>
      <GlobalStyle />
      <Header>
        <DashboardTitle>SURAT ITMS (Live)</DashboardTitle>
        <Badge>Published</Badge>
        <StarButton>
          <svg width="16" height="16" viewBox="0 0 16 16" fill="none" stroke="#b2b2b2" strokeWidth="1.9">
            <path d="M8 1.9l1.8 4 4.5.5-3.3 3 .9 4.5L8 11.7l-3.9 2.2.9-4.5-3.3-3 4.5-.5z" />
          </svg>
        </StarButton>
        <HeaderActions>
          <svg width="20" height="22" viewBox="0 0 20 22" fill="none" stroke="#666" strokeWidth="1.7">
            <path d="M2.5 15.8v-5L12.7 .9l4.8 4.7L7.8 15.8zM10 3.5l4.9 4.9" />
            <path d="M0 19.7h20" strokeWidth="2" />
          </svg>
          <svg width="18" height="4" viewBox="0 0 18 4" fill="#666">
            <circle cx="2" cy="2" r="2" />
            <circle cx="9" cy="2" r="2" />
            <circle cx="16" cy="2" r="2" />
          </svg>
        </HeaderActions>
      </Header>
      <EmptyFilterRow />
      <Dashboard>
        <Tabs>
          {tabNames.map((name, i) => <Tab key={name} $active={i === 1}>{name}</Tab>)}
        </Tabs>
        <Grid>
          <Panel title="Number of routes facing network issue">
            <BigNumber $top={53} $size={53.5}>83</BigNumber>
          </Panel>
          <Panel title="Rotues facing network issues">
            <WordCloud />
          </Panel>
          <Panel title="Buses with a Potential Network Issue over Time">
            <BigNumber $top={65} $size={65}>7</BigNumber>
            <Sparkline />
          </Panel>
          <Panel title="Buses with Network Issues : License Plates">
            <TableHead>
              license_plate
              <svg width="8" height="10" viewBox="0 0 8 10" fill="#c4c4c4">
                <path d="M4 0l3.8 4.2H.2zM4 10L.2 5.8h7.6z" />
              </svg>
            </TableHead>
            <TableBody>
              {plates.map((p, i) => <TableRow key={p} $striped={i % 2 === 0}>{p}</TableRow>)}
            </TableBody>
          </Panel>
          <Panel wide title="Network issue and severity (Normalized between 1(satisfactory) to 5(poor)">
            <BaseMap />
          </Panel>
        </Grid>
      </Dashboard>
    </Page>
  );
}
